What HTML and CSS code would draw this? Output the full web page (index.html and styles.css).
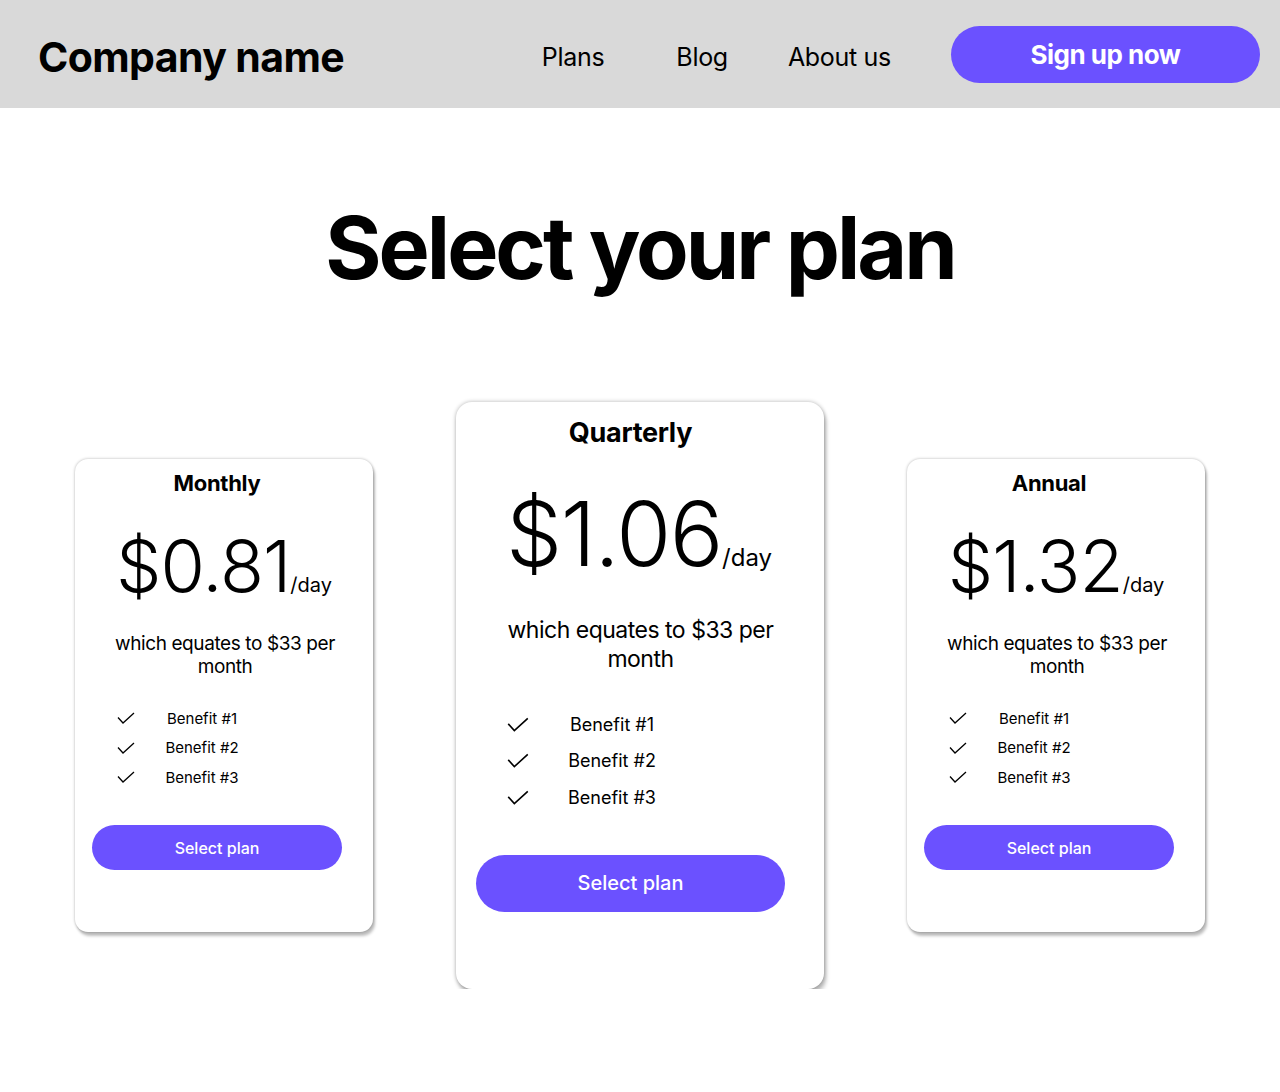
FILE: index.html
```html
<!DOCTYPE html>
<html lang="en">
<head>
    <meta charset="UTF-8">
    <meta name="viewport" content="width=device-width, initial-scale=1.0">
    <title>Select your plan</title>
    <link rel="stylesheet" href="styles.css">
</head>
<body>
    <header class="site-header">
        <a class="brand" href="#">Company name</a>
        <nav class="site-nav">
            <a href="#">Plans</a>
            <a href="#">Blog</a>
            <a href="#">About us</a>
        </nav>
        <button class="signup-btn">Sign up now</button>
    </header>

    <main class="pricing">
        <h1 class="pricing-title">Select your plan</h1>

        <section class="plans">
            <article class="plan">
                <h2 class="plan-name">Monthly</h2>
                <p class="plan-price"><span class="price-amount">$0.81</span><span class="price-unit">/day</span></p>
                <p class="plan-note">which equates to $33 per month</p>
                <ul class="plan-benefits">
                    <li><svg viewBox="0 0 18 12"><polyline points="1,5.5 6,11 17,1" /></svg><span>Benefit #1</span></li>
                    <li><svg viewBox="0 0 18 12"><polyline points="1,5.5 6,11 17,1" /></svg><span>Benefit #2</span></li>
                    <li><svg viewBox="0 0 18 12"><polyline points="1,5.5 6,11 17,1" /></svg><span>Benefit #3</span></li>
                </ul>
                <button class="plan-select">Select plan</button>
            </article>

            <article class="plan plan--featured">
                <h2 class="plan-name">Quarterly</h2>
                <p class="plan-price"><span class="price-amount">$1.06</span><span class="price-unit">/day</span></p>
                <p class="plan-note">which equates to $33 per month</p>
                <ul class="plan-benefits">
                    <li><svg viewBox="0 0 18 12"><polyline points="1,5.5 6,11 17,1" /></svg><span>Benefit #1</span></li>
                    <li><svg viewBox="0 0 18 12"><polyline points="1,5.5 6,11 17,1" /></svg><span>Benefit #2</span></li>
                    <li><svg viewBox="0 0 18 12"><polyline points="1,5.5 6,11 17,1" /></svg><span>Benefit #3</span></li>
                </ul>
                <button class="plan-select">Select plan</button>
            </article>

            <article class="plan">
                <h2 class="plan-name">Annual</h2>
                <p class="plan-price"><span class="price-amount">$1.32</span><span class="price-unit">/day</span></p>
                <p class="plan-note">which equates to $33 per month</p>
                <ul class="plan-benefits">
                    <li><svg viewBox="0 0 18 12"><polyline points="1,5.5 6,11 17,1" /></svg><span>Benefit #1</span></li>
                    <li><svg viewBox="0 0 18 12"><polyline points="1,5.5 6,11 17,1" /></svg><span>Benefit #2</span></li>
                    <li><svg viewBox="0 0 18 12"><polyline points="1,5.5 6,11 17,1" /></svg><span>Benefit #3</span></li>
                </ul>
                <button class="plan-select">Select plan</button>
            </article>
        </section>
    </main>
</body>
</html>
```

FILE: styles.css
```css
* {
    box-sizing: border-box;
}

body {
    margin: 0;
    font-family: "Inter", "Liberation Sans", sans-serif;
    color: #000;
    background: #fff;
}

/* header */
.site-header {
    display: flex;
    align-items: center;
    height: 108px;
    padding: 0 20px 0 38px;
    background-color: #d9d9d9;
}

.brand {
    margin-top: 5px;
    font-size: 41px;
    font-weight: 700;
    letter-spacing: -0.6px;
    color: #000;
    text-decoration: none;
}

.site-nav {
    display: flex;
    gap: 60px;
    margin: 5px 60px 0 auto;
}

.site-nav a {
    font-size: 25px;
    font-weight: 400;
    letter-spacing: -0.3px;
    color: #000;
    text-decoration: none;
}

.site-nav a:first-child {
    margin-right: 12px;
}

.signup-btn {
    width: 309px;
    height: 57px;
    border: none;
    border-radius: 29px;
    background-color: #6b51ff;
    color: #fff;
    font-family: inherit;
    font-size: 26px;
    font-weight: 700;
    letter-spacing: -0.5px;
    cursor: pointer;
}

/* pricing */
.pricing-title {
    margin: 90px 0 0;
    font-size: 86px;
    line-height: 100px;
    font-weight: 700;
    letter-spacing: -3px;
    text-align: center;
}

.plans {
    display: flex;
    align-items: center;
    justify-content: center;
    gap: 83px;
    margin-top: 104px;
}

.plan {
    display: flex;
    flex-direction: column;
    align-items: center;
    width: 298px;
    padding: 10px 31px 62px 17px;
    border-radius: 13px;
    background: #fff;
    box-shadow: 0 0 3px rgba(0, 0, 0, 0.3), 2px 4px 3px rgba(0, 0, 0, 0.25);
}

.plan-name {
    margin: 0;
    font-size: 22px;
    line-height: 28px;
    font-weight: 700;
    letter-spacing: -0.3px;
}

.plan-price {
    display: flex;
    align-items: baseline;
    margin: 29px 0 0 14px;
    line-height: 80px;
    white-space: nowrap;
}

.price-amount {
    font-size: 72px;
    font-weight: 300;
    letter-spacing: -1px;
}

.price-unit {
    font-size: 20px;
    font-weight: 400;
    line-height: 1;
}

.plan-note {
    width: 240px;
    margin: 26px 0 0 16px;
    font-size: 19px;
    line-height: 23px;
    letter-spacing: -0.4px;
    text-align: center;
}

.plan-benefits {
    list-style: none;
    width: 250px;
    margin: 26px 0 0;
    padding: 0 0 0 25px;
}

.plan-benefits li {
    display: flex;
    align-items: center;
    height: 29.5px;
    font-size: 15px;
}

.plan-benefits svg {
    width: 18px;
    height: 12px;
    fill: none;
    stroke: #000;
    stroke-width: 1.3;
}

.plan-benefits span {
    width: 110px;
    margin-left: 12px;
    text-align: center;
}

.plan-select {
    width: 250px;
    height: 45px;
    margin-top: 33px;
    border: none;
    border-radius: 23px;
    background-color: #6b51ff;
    color: #fff;
    font-family: "Inter", sans-serif;
    font-size: 16px;
    font-weight: 500;
    cursor: pointer;
}

/* middle card is a scaled-up version */
.plan--featured {
    width: 368px;
    padding: 14px 39px 77px 20px;
    border-radius: 16px;
    box-shadow: 0 0 4px rgba(0, 0, 0, 0.3), 2px 5px 4px rgba(0, 0, 0, 0.25);
}

.plan--featured .plan-name {
    font-size: 27px;
    line-height: 34px;
}

.plan--featured .plan-price {
    margin: 34px 0 0 17px;
    line-height: 99px;
}

.plan--featured .price-amount {
    font-size: 89px;
    letter-spacing: -1.3px;
}

.plan--featured .price-unit {
    font-size: 24px;
}

.plan--featured .plan-note {
    width: 296px;
    margin: 33px 0 0 20px;
    font-size: 23px;
    line-height: 29px;
    letter-spacing: -0.5px;
}

.plan--featured .plan-benefits {
    width: 309px;
    margin-top: 32px;
    padding-left: 31px;
}

.plan--featured .plan-benefits li {
    height: 36.5px;
    font-size: 18px;
}

.plan--featured .plan-benefits svg {
    width: 22px;
    height: 15px;
}

.plan--featured .plan-benefits span {
    width: 136px;
    margin-left: 15px;
}

.plan--featured .plan-select {
    width: 309px;
    height: 57px;
    margin-top: 39px;
    border-radius: 29px;
    font-size: 20px;
}
```
